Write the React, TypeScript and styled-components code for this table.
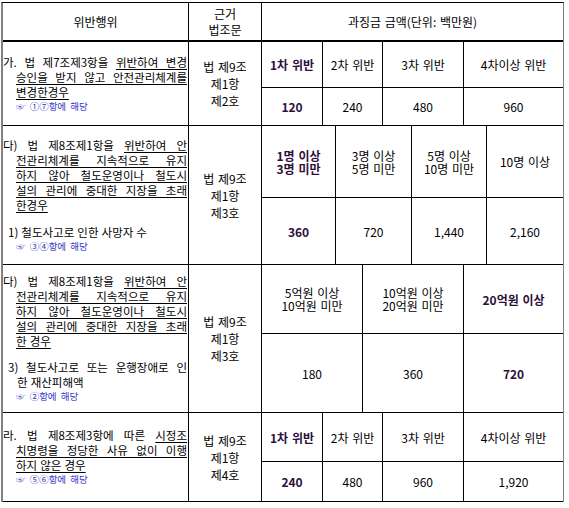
import React from "react";
import styled, { createGlobalStyle } from "styled-components";

const GlobalStyle = createGlobalStyle`
  html, body {
    margin: 0;
    padding: 0;
    background: #fff;
  }
  body {
    font-family: "Noto Sans CJK KR", "Noto Sans", sans-serif;
    font-size: 12px;
    word-spacing: 1px;
    color: #000;
  }
`;

const Page = styled.div`
  padding: 2px 0 0 1px;
`;

const Table = styled.div`
  box-sizing: border-box;
  width: 563px;
  border-top: 1px solid #000;
  border-left: 2px solid #808080;
  border-right: 1px solid #808080;
`;

const Row = styled.div<{ $h: number; $head?: boolean }>`
  box-sizing: border-box;
  display: grid;
  grid-template-columns: 186px 73px 1fr;
  height: ${(p) => p.$h}px;
  border-bottom: ${(p) => (p.$head ? 2 : 1)}px solid #000;
`;

const Cell = styled.div<{ $lh?: number }>`
  box-sizing: border-box;
  display: flex;
  flex-direction: column;
  justify-content: center;
  align-items: center;
  text-align: center;
  line-height: ${(p) => p.$lh ?? 16}px;
  border-right: 1px solid #000;
  &:last-child {
    border-right: none;
  }
`;

const Violation = styled.div`
  box-sizing: border-box;
  display: flex;
  flex-direction: column;
  justify-content: center;
  padding-right: 1px;
  border-right: 1px solid #000;
  font-size: 11.5px;
  word-spacing: 0.5px;
`;

const Line = styled.div<{ $indent?: number; $justify?: boolean; $gap?: number }>`
  padding-left: ${(p) => p.$indent ?? 0}px;
  margin-top: ${(p) => p.$gap ?? 0}px;
  line-height: 15px;
  white-space: nowrap;
  text-align: ${(p) => (p.$justify ? "justify" : "left")};
  text-align-last: ${(p) => (p.$justify ? "justify" : "auto")};
`;

const U = styled.span`
  text-decoration: underline;
  text-underline-offset: 2px;
`;

const Note = styled.div`
  padding-left: 13px;
  font-size: 9.5px;
  line-height: 13px;
  word-spacing: 2px;
  color: #3434c8;
  white-space: nowrap;
`;

const FeeGrid = styled.div<{ $cols: string; $top: number; $n: number }>`
  display: grid;
  grid-template-columns: ${(p) => p.$cols};
  grid-template-rows: ${(p) => p.$top}px 1fr;
  & > :nth-child(${(p) => p.$n}n) {
    border-right: none;
  }
  & > :nth-child(-n + ${(p) => p.$n}) {
    border-bottom: 1px solid #000;
  }
`;

const Fee = styled.div<{ $bold?: boolean }>`
  box-sizing: border-box;
  display: flex;
  align-items: center;
  justify-content: center;
  text-align: center;
  line-height: 13px;
  border-right: 1px solid #000;
  font-weight: ${(p) => (p.$bold ? 700 : 400)};
  color: ${(p) => (p.$bold ? "#2e0f3c" : "#000")};
`;

type FeeItem = { label: React.ReactNode; bold?: boolean };

const FeeTable = ({
  cols,
  top,
  heads,
  values,
}: {
  cols: string;
  top: number;
  heads: FeeItem[];
  values: FeeItem[];
}) => (
  <FeeGrid $cols={cols} $top={top} $n={heads.length}>
    {heads.map((h, i) => (
      <Fee key={"h" + i} $bold={h.bold}>
        <span>{h.label}</span>
      </Fee>
    ))}
    {values.map((v, i) => (
      <Fee key={"v" + i} $bold={v.bold}>
        {v.label}
      </Fee>
    ))}
  </FeeGrid>
);

const Law = ({ no }: { no: string }) => (
  <Cell $lh={17}>
    <span>
      법 제9조
      <br />
      제1항
      <br />
      {no}
    </span>
  </Cell>
);

const countHeads: FeeItem[] = [
  { label: "1차 위반", bold: true },
  { label: "2차 위반" },
  { label: "3차 위반" },
  { label: "4차이상 위반" },
];

const Article8Lines = ({ last }: { last: string }) => (
  <>
    <Line $justify>
      다) 법 제8조제1항을 <U>위반하여 안</U>
    </Line>
    <Line $indent={13} $justify>
      <U>전관리체계를 지속적으로 유지</U>
    </Line>
    <Line $indent={13} $justify>
      <U>하지 않아 철도운영이나 철도시</U>
    </Line>
    <Line $indent={13} $justify>
      <U>설의 관리에 중대한 지장을 초래</U>
    </Line>
    <Line $indent={13}>
      <U>{last}</U>
    </Line>
  </>
);

export default function App() {
  return (
    <Page>
      <GlobalStyle />
      <Table>
        <Row $h={39} $head>
          <Cell>위반행위</Cell>
          <Cell>
            <span>
              근거
              <br />
              법조문
            </span>
          </Cell>
          <Cell>과징금 금액(단위: 백만원)</Cell>
        </Row>

        <Row $h={84}>
          <Violation>
            <Line $justify>
              가. 법 제7조제3항을 <U>위반하여 변경</U>
            </Line>
            <Line $indent={13} $justify>
              <U>승인을 받지 않고 안전관리체계를</U>
            </Line>
            <Line $indent={13}>
              <U>변경한경우</U>
            </Line>
            <Note>☞ ①⑦항에 해당</Note>
          </Violation>
          <Law no="제2호" />
          <FeeTable
            cols="61px 60px 81px 1fr"
            top={46}
            heads={countHeads}
            values={[{ label: "120", bold: true }, { label: "240" }, { label: "480" }, { label: "960" }]}
          />
        </Row>

        <Row $h={139}>
          <Violation>
            <Article8Lines last="한경우" />
            <Line $indent={5} $gap={12}>
              1) 철도사고로 인한 사망자 수
            </Line>
            <Note>☞ ③④항에 해당</Note>
          </Violation>
          <Law no="제3호" />
          <FeeTable
            cols="74px 76px 75px 1fr"
            top={72}
            heads={[
              {
                label: (
                  <>
                    1명 이상
                    <br />
                    3명 미만
                  </>
                ),
                bold: true,
              },
              {
                label: (
                  <>
                    3명 이상
                    <br />
                    5명 미만
                  </>
                ),
              },
              {
                label: (
                  <>
                    5명 이상
                    <br />
                    10명 미만
                  </>
                ),
              },
              { label: "10명 이상" },
            ]}
            values={[{ label: "360", bold: true }, { label: "720" }, { label: "1,440" }, { label: "2,160" }]}
          />
        </Row>

        <Row $h={148}>
          <Violation>
            <Article8Lines last="한 경우" />
            <Line $indent={5} $gap={11} $justify>
              3) 철도사고로 또는 운행장애로 인
            </Line>
            <Line $indent={14}>한 재산피해액</Line>
            <Note>☞ ②항에 해당</Note>
          </Violation>
          <Law no="제3호" />
          <FeeTable
            cols="101px 101px 1fr"
            top={69}
            heads={[
              {
                label: (
                  <>
                    5억원 이상
                    <br />
                    10억원 미만
                  </>
                ),
              },
              {
                label: (
                  <>
                    10억원 이상
                    <br />
                    20억원 미만
                  </>
                ),
              },
              { label: "20억원 이상", bold: true },
            ]}
            values={[{ label: "180" }, { label: "360" }, { label: "720", bold: true }]}
          />
        </Row>

        <Row $h={89}>
          <Violation>
            <Line $justify>
              라. 법 제8조제3항에 따른 <U>시정조</U>
            </Line>
            <Line $indent={13} $justify>
              <U>치명령을 정당한 사유 없이 이행</U>
            </Line>
            <Line $indent={13}>
              <U>하지 않은 경우</U>
            </Line>
            <Note>☞ ⑤⑥항에 해당</Note>
          </Violation>
          <Law no="제4호" />
          <FeeTable
            cols="61px 60px 81px 1fr"
            top={49}
            heads={countHeads}
            values={[{ label: "240", bold: true }, { label: "480" }, { label: "960" }, { label: "1,920" }]}
          />
        </Row>
      </Table>
    </Page>
  );
}
